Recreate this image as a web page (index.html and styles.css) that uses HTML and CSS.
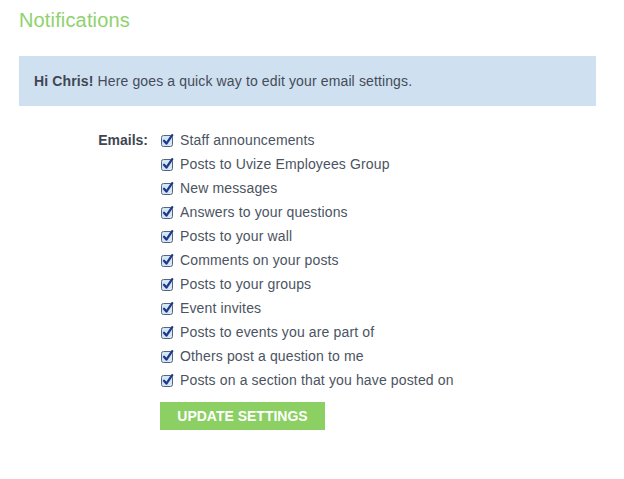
FILE: index.html
```html
<!DOCTYPE html>
<html>
<head>
<meta charset="utf-8">
<link rel="stylesheet" href="styles.css">
</head>
<body>
<div class="page">
  <h1 class="title">Notifications</h1>
  <div class="intro"><strong>Hi Chris!</strong> Here goes a quick way to edit your email settings.</div>
  <form class="settings">
    <div class="label">Emails:</div>
    <ul class="options">
      <li><span class="cb"><svg viewBox="0 0 13 13" width="13" height="13"><rect x="0.5" y="1.5" width="11" height="11" rx="2" fill="#d6e6f8" stroke="#56657a"/><path d="M3 6.8 L5.4 9.6 L11.2 1.2" fill="none" stroke="#1d3a86" stroke-width="2.3" stroke-linecap="round" stroke-linejoin="round"/></svg></span>Staff announcements</li>
      <li><span class="cb"><svg viewBox="0 0 13 13" width="13" height="13"><rect x="0.5" y="1.5" width="11" height="11" rx="2" fill="#d6e6f8" stroke="#56657a"/><path d="M3 6.8 L5.4 9.6 L11.2 1.2" fill="none" stroke="#1d3a86" stroke-width="2.3" stroke-linecap="round" stroke-linejoin="round"/></svg></span>Posts to Uvize Employees Group</li>
      <li><span class="cb"><svg viewBox="0 0 13 13" width="13" height="13"><rect x="0.5" y="1.5" width="11" height="11" rx="2" fill="#d6e6f8" stroke="#56657a"/><path d="M3 6.8 L5.4 9.6 L11.2 1.2" fill="none" stroke="#1d3a86" stroke-width="2.3" stroke-linecap="round" stroke-linejoin="round"/></svg></span>New messages</li>
      <li><span class="cb"><svg viewBox="0 0 13 13" width="13" height="13"><rect x="0.5" y="1.5" width="11" height="11" rx="2" fill="#d6e6f8" stroke="#56657a"/><path d="M3 6.8 L5.4 9.6 L11.2 1.2" fill="none" stroke="#1d3a86" stroke-width="2.3" stroke-linecap="round" stroke-linejoin="round"/></svg></span>Answers to your questions</li>
      <li><span class="cb"><svg viewBox="0 0 13 13" width="13" height="13"><rect x="0.5" y="1.5" width="11" height="11" rx="2" fill="#d6e6f8" stroke="#56657a"/><path d="M3 6.8 L5.4 9.6 L11.2 1.2" fill="none" stroke="#1d3a86" stroke-width="2.3" stroke-linecap="round" stroke-linejoin="round"/></svg></span>Posts to your wall</li>
      <li><span class="cb"><svg viewBox="0 0 13 13" width="13" height="13"><rect x="0.5" y="1.5" width="11" height="11" rx="2" fill="#d6e6f8" stroke="#56657a"/><path d="M3 6.8 L5.4 9.6 L11.2 1.2" fill="none" stroke="#1d3a86" stroke-width="2.3" stroke-linecap="round" stroke-linejoin="round"/></svg></span>Comments on your posts</li>
      <li><span class="cb"><svg viewBox="0 0 13 13" width="13" height="13"><rect x="0.5" y="1.5" width="11" height="11" rx="2" fill="#d6e6f8" stroke="#56657a"/><path d="M3 6.8 L5.4 9.6 L11.2 1.2" fill="none" stroke="#1d3a86" stroke-width="2.3" stroke-linecap="round" stroke-linejoin="round"/></svg></span>Posts to your groups</li>
      <li><span class="cb"><svg viewBox="0 0 13 13" width="13" height="13"><rect x="0.5" y="1.5" width="11" height="11" rx="2" fill="#d6e6f8" stroke="#56657a"/><path d="M3 6.8 L5.4 9.6 L11.2 1.2" fill="none" stroke="#1d3a86" stroke-width="2.3" stroke-linecap="round" stroke-linejoin="round"/></svg></span>Event invites</li>
      <li><span class="cb"><svg viewBox="0 0 13 13" width="13" height="13"><rect x="0.5" y="1.5" width="11" height="11" rx="2" fill="#d6e6f8" stroke="#56657a"/><path d="M3 6.8 L5.4 9.6 L11.2 1.2" fill="none" stroke="#1d3a86" stroke-width="2.3" stroke-linecap="round" stroke-linejoin="round"/></svg></span>Posts to events you are part of</li>
      <li><span class="cb"><svg viewBox="0 0 13 13" width="13" height="13"><rect x="0.5" y="1.5" width="11" height="11" rx="2" fill="#d6e6f8" stroke="#56657a"/><path d="M3 6.8 L5.4 9.6 L11.2 1.2" fill="none" stroke="#1d3a86" stroke-width="2.3" stroke-linecap="round" stroke-linejoin="round"/></svg></span>Others post a question to me</li>
      <li><span class="cb"><svg viewBox="0 0 13 13" width="13" height="13"><rect x="0.5" y="1.5" width="11" height="11" rx="2" fill="#d6e6f8" stroke="#56657a"/><path d="M3 6.8 L5.4 9.6 L11.2 1.2" fill="none" stroke="#1d3a86" stroke-width="2.3" stroke-linecap="round" stroke-linejoin="round"/></svg></span>Posts on a section that you have posted on</li>
    </ul>
    <div></div>
    <div class="actions"><button type="button" class="btn">UPDATE SETTINGS</button></div>
  </form>
</div>
</body>
</html>
```

FILE: styles.css
```css
html, body {
  margin: 0;
  padding: 0;
  background: #fff;
}
body {
  font-family: "Liberation Sans", Arial, Helvetica, sans-serif;
  color: #4b5462;
}
.page {
  padding: 8px 28px 0 19px;
  width: 577px;
}
.title {
  margin: 0;
  font-size: 20px;
  font-weight: normal;
  color: #8fd26d;
  line-height: 24px;
  letter-spacing: 0.15px;
}
.intro {
  margin-top: 24px;
  background: #cfe0f0;
  height: 50px;
  box-sizing: border-box;
  padding: 17px 15px 0 15px;
  font-size: 14px;
  line-height: 16px;
  color: #444c58;
  letter-spacing: 0.13px;
}
.intro strong {
  color: #3f4652;
}
.settings {
  margin-top: 25px;
  display: grid;
  grid-template-columns: 130px 1fr;
  column-gap: 12px;
}
.label {
  text-align: right;
  font-weight: bold;
  font-size: 14px;
  line-height: 18px;
  color: #3f4652;
  padding-right: 1px;
}
.options {
  list-style: none;
  margin: 0;
  padding: 0;
  display: flex;
  flex-direction: column;
  gap: 6px;
}
.options li {
  display: flex;
  align-items: center;
  font-size: 14px;
  line-height: 18px;
  letter-spacing: 0.14px;
}
.cb {
  display: inline-flex;
  width: 13px;
  height: 13px;
  margin-right: 6px;
}
.actions {
  margin-top: 13px;
}
.btn {
  border: 0;
  background: #8ccf62;
  color: #fff;
  font-family: "Liberation Sans", Arial, sans-serif;
  font-weight: bold;
  font-size: 14px;
  width: 165px;
  height: 28px;
  padding: 0;
  margin-left: -1px;
  cursor: pointer;
}
```
